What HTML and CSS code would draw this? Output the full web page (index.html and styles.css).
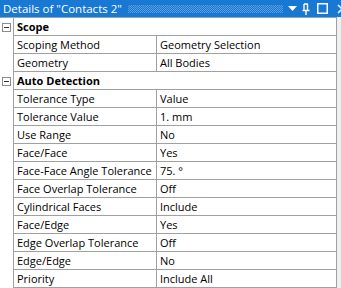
FILE: index.html
```html
<!DOCTYPE html>
<html lang="en">
<head>
    <meta charset="UTF-8">
    <title>Details of "Contacts 2"</title>
    <link rel="stylesheet" href="styles.css">
</head>
<body>

    <!-- Panel title bar -->
    <div class="titlebar">
        <span class="title">Details of "Contacts 2"</span>
        <span class="grip"></span>
        <span class="tools">
            <svg class="tool-menu" width="9" height="6" viewBox="0 0 9 6"><path d="M0 0h9L4.5 5z" fill="#fff"/></svg>
            <svg class="tool-pin" width="8" height="12" viewBox="0 0 8 12"><path d="M2 1h4M2 1v6M5.5 1v6M0.5 7.5h7M4 7.5v4.5" stroke="#fff" stroke-width="1.4" fill="none"/></svg>
            <svg class="tool-max" width="11" height="11" viewBox="0 0 11 11"><rect x="0.75" y="0.75" width="9.5" height="9.5" stroke="#fff" stroke-width="1.5" fill="none"/></svg>
            <svg class="tool-close" width="10" height="10" viewBox="0 0 10 10"><path d="M1 1l8 8M9 1l-8 8" stroke="#fff" stroke-width="1.5"/></svg>
        </span>
    </div>

    <div class="details">
        <div class="gutter"><span class="toggle"></span></div>
        <div class="section">Scope</div>

        <div class="gutter"></div><div class="label">Scoping Method</div><div class="value">Geometry Selection</div>
        <div class="gutter"></div><div class="label">Geometry</div><div class="value">All Bodies</div>

        <div class="gutter"><span class="toggle"></span></div>
        <div class="section">Auto Detection</div>

        <div class="gutter"></div><div class="label">Tolerance Type</div><div class="value">Value</div>
        <div class="gutter"></div><div class="label">Tolerance Value</div><div class="value">1. mm</div>
        <div class="gutter"></div><div class="label">Use Range</div><div class="value">No</div>
        <div class="gutter"></div><div class="label">Face/Face</div><div class="value">Yes</div>
        <div class="gutter"></div><div class="label">Face-Face Angle Tolerance</div><div class="value">75. °</div>
        <div class="gutter"></div><div class="label">Face Overlap Tolerance</div><div class="value">Off</div>
        <div class="gutter"></div><div class="label">Cylindrical Faces</div><div class="value">Include</div>
        <div class="gutter"></div><div class="label">Face/Edge</div><div class="value">Yes</div>
        <div class="gutter"></div><div class="label">Edge Overlap Tolerance</div><div class="value">Off</div>
        <div class="gutter"></div><div class="label">Edge/Edge</div><div class="value">No</div>
        <div class="gutter"></div><div class="label">Priority</div><div class="value">Include All</div>
    </div>

</body>
</html>
```

FILE: styles.css
```css
body {
    margin: 0;
    width: 341px;
    height: 288px;
    overflow: hidden;
    background-color: #f0f0f0;
    font-family: "Open Sans", "Noto Sans", sans-serif;
    font-size: 11px;
    color: #000;
}
.titlebar {
    width: 347px;
    height: 17px;
    background-color: #1979d2;
    color: #fff;
    display: flex;
    align-items: center;
    padding-left: 3px;
    box-sizing: border-box;
    white-space: nowrap;
}
.title {
    font-size: 11.5px;
}
/* dotted drag area */
.grip {
    flex: 1;
    height: 8px;
    margin: 0 5px 0 6px;
    background: repeating-conic-gradient(rgba(255, 255, 255, 0.28) 0 25%, transparent 0 50%) 0 0 / 2px 2px;
}
.tools {
    display: flex;
    align-items: center;
}
.tool-pin {
    margin-left: 5px;
}
.tool-max {
    margin-left: 7px;
}
.tool-close {
    margin-left: 9px;
}
.details {
    display: grid;
    grid-template-columns: 14px 143px 180px;
    grid-auto-rows: 18px;
    background-color: #fff;
    width: 337px;
    border-top: 1px solid #a0a0a0;
}
.gutter {
    border-right: 1px solid #a0a0a0;
    display: flex;
    align-items: center;
    justify-content: center;
}
.label, .value, .section {
    border-bottom: 1px solid #a0a0a0;
    border-right: 1px solid #a0a0a0;
    padding-left: 3px;
    line-height: 17px;
    white-space: nowrap;
    overflow: hidden;
}
.section {
    grid-column: 2 / 4;
    font-weight: bold;
}
.toggle {
    width: 7px;
    height: 7px;
    border: 1px solid #8c8c8c;
    position: relative;
    margin-left: -1px;
}
.toggle::after {
    content: "";
    position: absolute;
    left: 1px;
    top: 3px;
    width: 5px;
    height: 1px;
    background-color: #333;
}
```
